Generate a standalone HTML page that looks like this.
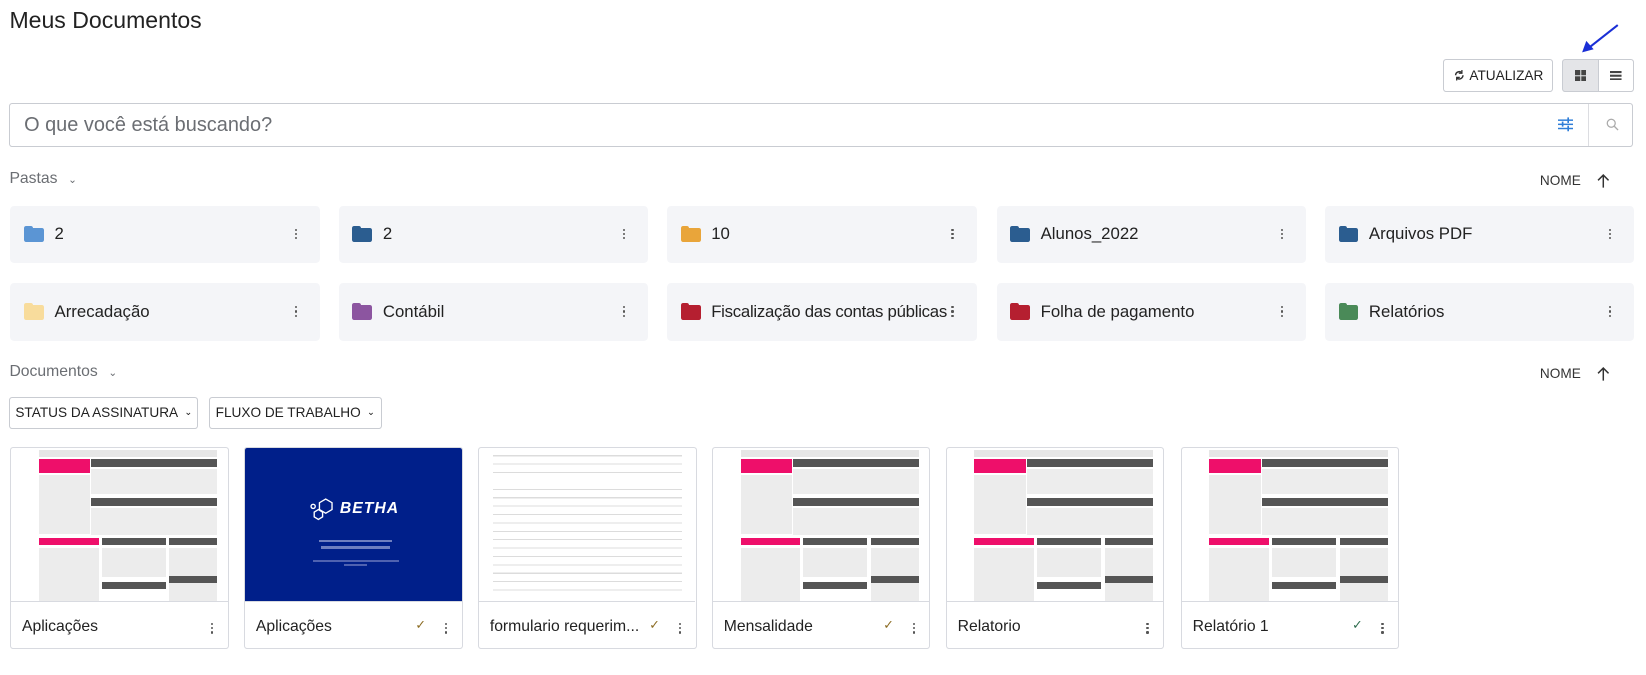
<!DOCTYPE html>
<html><head><meta charset="utf-8">
<style>
*{box-sizing:border-box;margin:0;padding:0}
html,body{width:1646px;height:675px;background:#fff;overflow:hidden}
#w{zoom:1.049;position:relative;width:1570px;height:644px;font-family:"Liberation Sans","DejaVu Sans",sans-serif;color:#1f1f1f}
.abs{position:absolute}
h1{position:absolute;left:9px;top:7px;font-size:22px;font-weight:400;color:#222}
.btn{position:absolute;border:1px solid #c9ccd2;border-radius:3px;background:#fff;font-size:13px;color:#222;display:flex;align-items:center;justify-content:center}
.search{position:absolute;left:9px;top:98px;width:1548px;height:42px;border:1px solid #c9ccd2;border-radius:3px}
.search span{position:absolute;left:13px;top:10px;font-size:19px;color:#6b6e73}
.sec{position:absolute;left:9px;font-size:15px;color:#6b6e73}
.nome{position:absolute;left:1468px;font-size:13px;color:#333}
.folder{position:absolute;width:295px;height:55px;background:#f4f5f8;border-radius:4px}
.folder .ic{position:absolute;left:13px;top:21px;width:19px;height:14px;border-radius:2px}
.folder .ic:before{content:"";position:absolute;left:0;top:-2px;width:8px;height:4px;border-radius:2px 2px 0 0;background:inherit}
.folder .t{position:absolute;left:42px;top:18px;font-size:16px;color:#222;white-space:nowrap}
.dots{position:absolute;width:3px}
.dots i{display:block;width:2px;height:2px;background:#555;margin-bottom:2px;border-radius:1px}
.doc{position:absolute;top:426px;width:208px;height:193px;border:1px solid #d8dae0;border-radius:3px;overflow:hidden;background:#fff}
.doc .th{position:absolute;left:0;top:0;width:206px;height:147px;border-bottom:1px solid #d8dae0;overflow:hidden}
.doc .nm{position:absolute;left:10px;top:162px;font-size:15px;color:#222;white-space:nowrap}
.g{position:absolute;background:#e6e6e6}
.d{position:absolute;background:#555}
.p{position:absolute;background:#ee0f6a}
</style></head><body><div id="w">
<h1>Meus Documentos</h1>
<svg class="abs" style="left:1506px;top:22px" width="40" height="30"><line x1="36" y1="2" x2="8" y2="24" stroke="#1a2fd6" stroke-width="2"/><polygon points="2,28 6,17 13,25" fill="#1a2fd6"/></svg>
<div class="btn" style="left:1376px;top:56px;width:104px;height:32px">
<svg width="12" height="12" viewBox="0 0 12 12" style="margin-right:4px"><path d="M2.5 6a3.5 3.5 0 0 1 6-2.4M9.5 6a3.5 3.5 0 0 1-6 2.4" stroke="#333" stroke-width="1.4" fill="none"/><path d="M8.5 1v3h-3M3.5 11V8h3" stroke="#333" stroke-width="1.2" fill="none"/></svg>ATUALIZAR</div>
<div class="btn" style="left:1489px;top:56px;width:35px;height:32px;background:#e4e5e8;border-radius:3px 0 0 3px">
<svg width="11" height="11"><rect x="0" y="0" width="5" height="5" fill="#444"/><rect x="6" y="0" width="5" height="5" fill="#444"/><rect x="0" y="6" width="5" height="5" fill="#444"/><rect x="6" y="6" width="5" height="5" fill="#444"/></svg></div>
<div class="btn" style="left:1523px;top:56px;width:35px;height:32px;border-radius:0 3px 3px 0">
<svg width="11" height="9"><rect x="0" y="0" width="11" height="2" fill="#444"/><rect x="0" y="3.5" width="11" height="2" fill="#444"/><rect x="0" y="7" width="11" height="2" fill="#444"/></svg></div>
<div class="search"><span>O que você está buscando?</span>
<svg class="abs" style="left:1475px;top:13px" width="15" height="14" viewBox="0 0 17 15"><g stroke="#2f7ed8" stroke-width="1.6"><line x1="0" y1="3" x2="17" y2="3"/><line x1="0" y1="7.5" x2="17" y2="7.5"/><line x1="0" y1="12" x2="17" y2="12"/></g><g stroke="#2f7ed8" stroke-width="1.8"><line x1="11" y1="0" x2="11" y2="6"/><line x1="5" y1="4.5" x2="5" y2="10"/><line x1="11" y1="9" x2="11" y2="15"/></g></svg>
<div class="abs" style="left:1504px;top:0;width:1px;height:40px;background:#dcdde1"></div>
<svg class="abs" style="left:1521px;top:14px" width="12" height="12"><circle cx="5" cy="5" r="3.8" stroke="#aaa" stroke-width="1.2" fill="none"/><line x1="8" y1="8" x2="11.5" y2="11.5" stroke="#aaa" stroke-width="1.3"/></svg>
</div>
<div class="sec" style="top:162px">Pastas <span style="font-size:10px;margin-left:6px">&#8964;</span></div>
<div class="nome" style="top:165px">NOME</div>
<svg class="abs" style="left:1522px;top:166px" width="12" height="13"><path d="M6 13V1M1 6l5-5 5 5" stroke="#333" stroke-width="1.4" fill="none"/></svg>

<div class="folder" style="left:10px;top:196px"><div class="ic" style="background:#5b95d4"></div><div class="t">2</div><div class="dots" style="left:271px;top:22px"><i></i><i></i><i></i></div></div>
<div class="folder" style="left:323px;top:196px"><div class="ic" style="background:#2b5d90"></div><div class="t">2</div><div class="dots" style="left:271px;top:22px"><i></i><i></i><i></i></div></div>
<div class="folder" style="left:636px;top:196px"><div class="ic" style="background:#e9a53a"></div><div class="t">10</div><div class="dots" style="left:271px;top:22px"><i></i><i></i><i></i></div></div>
<div class="folder" style="left:950px;top:196px"><div class="ic" style="background:#2b5d90"></div><div class="t">Alunos_2022</div><div class="dots" style="left:271px;top:22px"><i></i><i></i><i></i></div></div>
<div class="folder" style="left:1263px;top:196px"><div class="ic" style="background:#2b5d90"></div><div class="t">Arquivos PDF</div><div class="dots" style="left:271px;top:22px"><i></i><i></i><i></i></div></div>
<div class="folder" style="left:10px;top:270px"><div class="ic" style="background:#f8dc9c"></div><div class="t">Arrecadação</div><div class="dots" style="left:271px;top:22px"><i></i><i></i><i></i></div></div>
<div class="folder" style="left:323px;top:270px"><div class="ic" style="background:#8c55a0"></div><div class="t">Contábil</div><div class="dots" style="left:271px;top:22px"><i></i><i></i><i></i></div></div>
<div class="folder" style="left:636px;top:270px"><div class="ic" style="background:#b51f30"></div><div class="t" style="letter-spacing:-0.25px">Fiscalização das contas públicas</div><div class="dots" style="left:271px;top:22px"><i></i><i></i><i></i></div></div>
<div class="folder" style="left:950px;top:270px"><div class="ic" style="background:#b51f30"></div><div class="t">Folha de pagamento</div><div class="dots" style="left:271px;top:22px"><i></i><i></i><i></i></div></div>
<div class="folder" style="left:1263px;top:270px"><div class="ic" style="background:#4a8a58"></div><div class="t">Relatórios</div><div class="dots" style="left:271px;top:22px"><i></i><i></i><i></i></div></div>

<div class="sec" style="top:346px">Documentos <span style="font-size:10px;margin-left:6px">&#8964;</span></div>
<div class="nome" style="top:349px">NOME</div>
<svg class="abs" style="left:1522px;top:350px" width="12" height="13"><path d="M6 13V1M1 6l5-5 5 5" stroke="#333" stroke-width="1.4" fill="none"/></svg>
<div class="btn" style="left:9px;top:378px;width:180px;height:31px">STATUS DA ASSINATURA <span style="font-size:9px;margin-left:6px">&#8964;</span></div>
<div class="btn" style="left:199px;top:378px;width:165px;height:31px">FLUXO DE TRABALHO <span style="font-size:9px;margin-left:6px">&#8964;</span></div>

<div class="doc" style="left:10px"><div class="th">
<div class="g" style="left:26px;top:2px;width:170px;height:7px"></div>
<div class="p" style="left:26px;top:11px;width:49px;height:13px"></div>
<div class="g" style="left:26px;top:26px;width:49px;height:56px;background:#ececec"></div>
<div class="d" style="left:76px;top:11px;width:120px;height:7px"></div>
<div class="g" style="left:76px;top:20px;width:120px;height:24px;background:#ededed"></div>
<div class="d" style="left:76px;top:48px;width:120px;height:7px"></div>
<div class="g" style="left:76px;top:57px;width:120px;height:26px;background:#ededed"></div>
<div class="p" style="left:26px;top:86px;width:57px;height:7px"></div>
<div class="g" style="left:26px;top:95px;width:57px;height:52px;background:#ececec"></div>
<div class="d" style="left:86px;top:86px;width:61px;height:7px"></div>
<div class="g" style="left:86px;top:95px;width:61px;height:28px;background:#ececec"></div>
<div class="d" style="left:86px;top:128px;width:61px;height:7px"></div>
<div class="d" style="left:150px;top:86px;width:46px;height:7px"></div>
<div class="g" style="left:150px;top:95px;width:46px;height:52px;background:#ececec"></div>
<div class="d" style="left:150px;top:122px;width:46px;height:7px"></div>
</div><div class="nm">Aplicações</div><div class="dots" style="left:190px;top:167px"><i></i><i></i><i></i></div></div>

<div class="doc" style="left:233px"><div class="th" style="background:#001f8a">
<svg class="abs" style="left:62px;top:48px" width="24" height="22"><g stroke="#fff" stroke-width="1.3" fill="none"><polygon points="15,1 21,4.5 21,11 15,14.5 9,11 9,4.5"/><polygon points="8,11 12,13.5 12,18 8,20.5 4,18 4,13.5"/><circle cx="3" cy="8" r="2"/></g></svg>
<div class="abs" style="left:90px;top:50px;color:#fff;font-weight:700;font-style:italic;font-size:15px;letter-spacing:1px">BETHA</div>
<div class="abs" style="left:70px;top:88px;width:70px;height:2px;background:#6f7fc0"></div>
<div class="abs" style="left:72px;top:94px;width:66px;height:2px;background:#6f7fc0"></div>
<div class="abs" style="left:64px;top:107px;width:82px;height:2px;background:#4f62b0"></div>
<div class="abs" style="left:94px;top:111px;width:22px;height:2px;background:#4f62b0"></div>
</div><div class="nm">Aplicações</div>
<div class="abs" style="left:162px;top:161px;color:#8a6a20;font-size:12px">✓</div>
<div class="dots" style="left:190px;top:167px"><i></i><i></i><i></i></div></div>

<div class="doc" style="left:456px"><div class="th">
<div class="abs" style="left:13px;top:2px;width:180px;height:140px;background:repeating-linear-gradient(#fff 0 5px,#dcdcdc 5px 6px,#fff 6px 8px)"></div>
<div class="abs" style="left:13px;top:30px;width:180px;height:6px;background:#fff"></div>
</div><div class="nm">formulario requerim...</div>
<div class="abs" style="left:162px;top:161px;color:#8a6a20;font-size:12px">✓</div>
<div class="dots" style="left:190px;top:167px"><i></i><i></i><i></i></div></div>

<div class="doc" style="left:679px" id="m"></div>
<div class="doc" style="left:902px" id="r"></div>
<div class="doc" style="left:1126px" id="r1"></div>
</div>
<script>
var tpl=document.querySelector('.doc .th').outerHTML;
function f(id,name,chk,col){var e=document.getElementById(id);e.innerHTML=tpl+'<div class="nm">'+name+'</div>'+(chk?'<div class="abs" style="left:162px;top:161px;color:'+col+';font-size:12px">✓</div>':'')+'<div class="dots" style="left:190px;top:167px"><i></i><i></i><i></i></div>';}
f('m','Mensalidade',1,'#8a6a20');f('r','Relatorio',0);f('r1','Relatório 1',1,'#2a6a4a');
</script>
</body></html>
